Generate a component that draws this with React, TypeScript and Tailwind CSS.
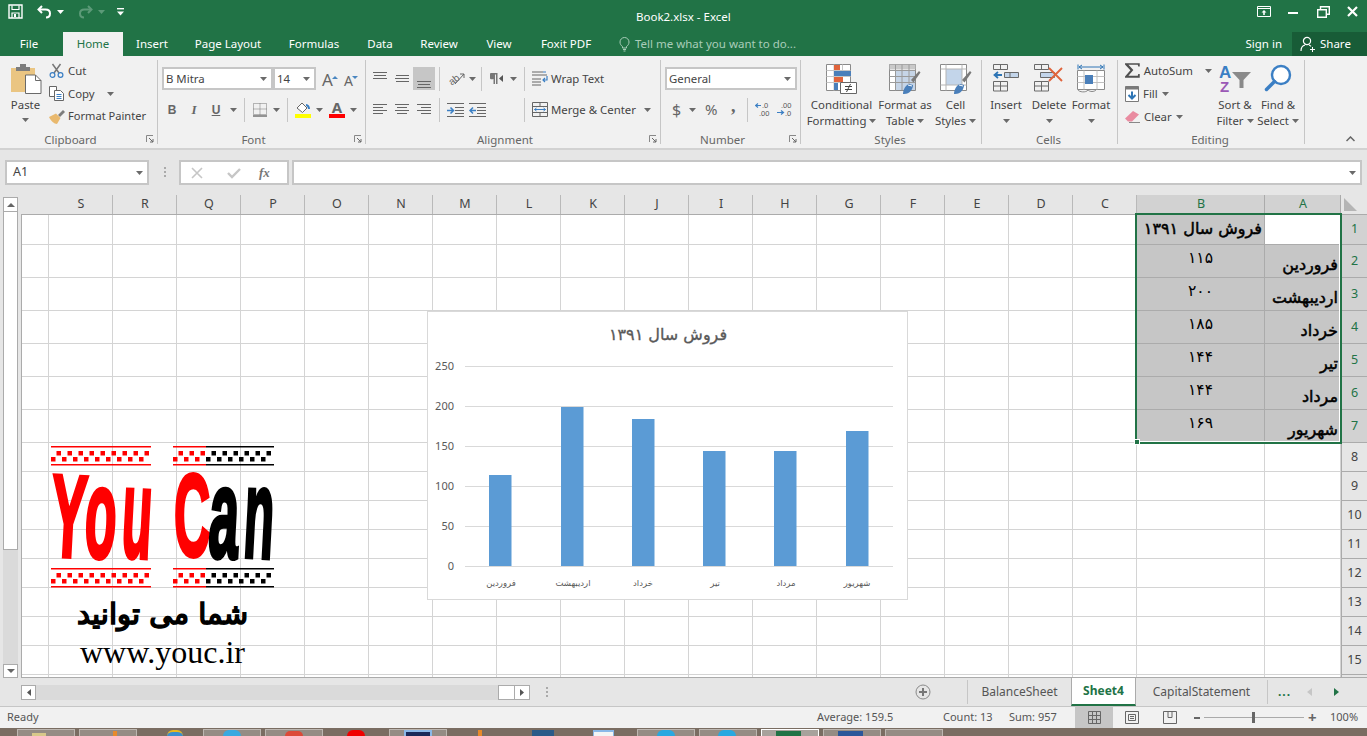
import React from "react";

const ui = "font-['Noto_Sans','Open_Sans',sans-serif]";
const fa = "font-['DejaVu_Sans','Noto_Sans',sans-serif]";

const Caret = ({ c = "#6a6a6a", cls = "" }: { c?: string; cls?: string }) => (
  <svg width="7" height="4" viewBox="0 0 7 4" className={"shrink-0 " + cls}><path d="M0 0h7L3.5 4z" fill={c} /></svg>
);

/* ---------- title bar icons ---------- */
const SaveIcon = () => (
  <svg width="15" height="15" viewBox="0 0 15 15" fill="none"><path d="M1 1h13v13H1z" stroke="#fff" strokeWidth="1.4" /><path d="M4 1.5v4h7v-4" stroke="#fff" strokeWidth="1.2" /><path d="M4 14V9h7v5" stroke="#fff" strokeWidth="1.2" /><path d="M6 10h2v3H6z" fill="#fff" /></svg>
);
const Undo = ({ c = "#fff" }: { c?: string }) => (
  <svg width="15" height="14" viewBox="0 0 15 14" fill="none"><path d="M5 1 1.5 4.5 5 8" stroke={c} strokeWidth="2" /><path d="M2 4.5h6.5c3 0 4.5 1.8 4.5 4s-1.5 4-4 4" stroke={c} strokeWidth="2" /></svg>
);
const Redo = () => (
  <svg width="15" height="14" viewBox="0 0 15 14" fill="none"><g transform="translate(15 0) scale(-1 1)"><path d="M5 1 1.5 4.5 5 8" stroke="#5c9a78" strokeWidth="2" /><path d="M2 4.5h6.5c3 0 4.5 1.8 4.5 4s-1.5 4-4 4" stroke="#5c9a78" strokeWidth="2" /></g></svg>
);
const Customize = () => (
  <svg width="7" height="8" viewBox="0 0 7 8"><path d="M0 0h7v1.4H0z" fill="#fff" /><path d="M0 3.5h7L3.5 7.5z" fill="#fff" /></svg>
);
const RibbonDisplay = () => (
  <svg width="14" height="11" viewBox="0 0 14 11" fill="none"><path d="M.5.5h13v10H.5z" stroke="#fff" /><path d="M.5 2.5h13" stroke="#fff" /><path d="M7 4 4.5 6.5h1.7v2.5h1.6V6.500h1.700z" fill="#fff" /></svg>
);
const Minimize = () => <svg width="10" height="10" viewBox="0 0 10 10"><path d="M0 5h10v2H0z" fill="#fff" /></svg>;
const Restore = () => (
  <svg width="13" height="12" viewBox="0 0 13 12" fill="none"><path d="M.7 3.700h8.600v7.600H.7z" stroke="#fff" strokeWidth="1.4" /><path d="M3.500 3V.7h8.800v7.600H9.500" stroke="#fff" strokeWidth="1.4" /></svg>
);
const Close = () => <svg width="11" height="11" viewBox="0 0 11 11"><path d="M1 1l9 9M10 1l-9 9" stroke="#fff" strokeWidth="2.200" /></svg>;
const Bulb = () => (
  <svg width="11" height="16" viewBox="0 0 11 16" fill="none"><path d="M3.500 10.500C2 9.500 1 8 1 6a4.500 4.500 0 0 1 9 0c0 2-1 3.500-2.500 4.500v1.500h-4z" stroke="#a9cdb9" /><path d="M4 13.500h3M4.500 15h2" stroke="#a9cdb9" /></svg>
);
const ShareIcon = () => (
  <svg width="16" height="16" viewBox="0 0 16 16" fill="none"><circle cx="7" cy="5" r="3.600" stroke="#fff" strokeWidth="1.200" /><path d="M1 15c0-3.500 2-5.500 4-6M9 9c.8.300 1.500.700 2 1.300" stroke="#fff" strokeWidth="1.200" /><path d="M12.500 11v5M10 13.500h5" stroke="#fff" /></svg>
);

/* ---------- clipboard icons ---------- */
const PasteIcon = () => (
  <svg width="32" height="30" viewBox="0 0 32 30"><path d="M1 4h24v24H1z" fill="#eac582" /><path d="M6 3h14v4H6z" fill="#7d7d7d" /><path d="M10 0h6v4h-6z" fill="#7d7d7d" /><path d="M15.500 11h10l5.500 5.500V29.500H15.500z" fill="#fff" stroke="#6a6a6a" /><path d="M25.500 11v5.500H31" fill="none" stroke="#6a6a6a" /></svg>
);
const CutIcon = () => (
  <svg width="15" height="15" viewBox="0 0 15 15" fill="none"><path d="M3.500 1l6.500 9M11.500 1 5 10" stroke="#777" strokeWidth="1.500" /><circle cx="3.500" cy="12" r="2.400" stroke="#3b7fc4" strokeWidth="1.200" /><circle cx="11.500" cy="12" r="2.400" stroke="#3b7fc4" strokeWidth="1.200" /></svg>
);
const CopyIcon = () => (
  <svg width="15" height="15" viewBox="0 0 15 15" fill="none"><path d="M.5.500h7v10h-7z" fill="#fff" stroke="#666" /><path d="M5.500 4.500h6l3 3v7h-9z" fill="#fff" stroke="#666" /><path d="M7.500 8.500h5M7.500 10.500h5M7.500 12.500h5" stroke="#3b7fc4" /></svg>
);
const PainterIcon = () => (
  <svg width="16" height="15" viewBox="0 0 16 15"><path d="M9 6 14 1l2 2-5 5z" fill="#7d7d7d" /><path d="M0 8 7 4.500l4.500 4.500L8 15C5 15 2 12 0 8z" fill="#e9b96e" /></svg>
);

/* ---------- font icons ---------- */
const BordersIcon = () => (
  <svg width="14" height="14" viewBox="0 0 14 14" fill="none"><path d="M.5.500h13v11H.5zM7 .500v11M.5 6h13" stroke="#777" strokeDasharray="1 1" /><path d="M0 13h14" stroke="#555" strokeWidth="1.200" /></svg>
);
const FillIcon = () => (
  <svg width="17" height="16" viewBox="0 0 17 16"><path d="M2 6 7 1l5 5-4.500 4.500z" fill="#fff" stroke="#666" /><path d="M11 2c2.500.500 4 2 4 5h-2c0-1.500-1-3-2-3z" fill="#3b7fc4" /><path d="M0 12h16v4H0z" fill="#ffff00" /></svg>
);
const FontColor = () => (
  <div className="flex flex-col items-center w-[16px]">
    <span className="text-[15px] font-bold leading-[13px] text-[#666]">A</span>
    <div className="w-[16px] h-[4px] bg-[#ff0000]" />
  </div>
);
const UpTri = ({ down = false }: { down?: boolean }) => (
  <svg width="6" height="3" viewBox="0 0 6 3" className="mb-[11px] -ml-[1px]"><path d={down ? "M0 0h6L3 3z" : "M0 3h6L3 0z"} fill="#4a86c0" /></svg>
);

/* ---------- alignment icons ---------- */
const Lines = ({ rows, w = 15 }: { rows: [number, number, number][]; w?: number }) => (
  <svg width={w} height="15" viewBox={`0 0 ${w} 15`}>
    {rows.map(([y, x, l], i) => <rect key={i} x={x} y={y} width={l} height="1" fill="#666" />)}
  </svg>
);
const Orientation = () => (
  <svg width="19" height="15" viewBox="0 0 19 15" fill="none"><text x="1" y="12" fontSize="10" fill="#666" transform="rotate(-38 7 8)" fontFamily="Liberation Sans">ab</text><path d="M8 13 17 3M13 3h4v4" stroke="#666" /></svg>
);
const Pilcrow = () => (
  <svg width="14" height="12" viewBox="0 0 14 12"><path d="M1 0h6.500v11H6V1.500H5V11H3.500V6A3 3 0 0 1 1 0z" fill="#777" /><path d="M13 2v7L9 5.500z" fill="#555" /></svg>
);
const WrapIcon = () => (
  <svg width="17" height="15" viewBox="0 0 17 15" fill="none"><path d="M0 1h11M0 4h15M0 8h9M0 11h9M0 14h9" stroke="#666" /><path d="M11 1h3" stroke="#3b7fc4" /><path d="M15 5v4h-4M13 7l-2 2 2 2" stroke="#3b7fc4" strokeWidth="1.200" /></svg>
);
const MergeIcon = () => (
  <svg width="16" height="15" viewBox="0 0 16 15" fill="none"><path d="M.5.500h15v14H.5zM.5 4.500h15M.5 10.500h15M8 .500v4M8 10.500v4" stroke="#666" /><path d="M2.500 7.500h11M4.500 6l-2 1.500 2 1.500M11.500 6l2 1.500-2 1.500" stroke="#3b7fc4" /></svg>
);
const Indent = ({ rev = false }: { rev?: boolean }) => (
  <svg width="17" height="14" viewBox="0 0 17 14" fill="none"><path d="M0 .500h17M8 4.500h9M8 7.500h9M8 10.500h9M0 13.500h17" stroke="#666" />
    {rev ? <path d="M7 7.500H1M4 4.500l-3 3 3 3" stroke="#3b7fc4" strokeWidth="1.500" /> : <path d="M0 7.500h6M3.500 4.500l3 3-3 3" stroke="#3b7fc4" strokeWidth="1.500" />}
  </svg>
);
const DecIcon = ({ more = false }: { more?: boolean }) => (
  <svg width="16" height="15" viewBox="0 0 16 15" fill="none">
    <text x={more ? 4 : 7} y="6" fontSize="7.500" fill="#555" fontFamily="Liberation Sans">{more ? ".00" : ".0"}</text>
    <text x={more ? 8 : 4} y="14" fontSize="7.500" fill="#555" fontFamily="Liberation Sans">{more ? ".0" : ".00"}</text>
    {more ? <path d="M0 10.500h6M4 8.500l2.500 2-2.500 2" stroke="#3b7fc4" strokeWidth="1.200" /> : <path d="M1 3.500h5M3 1.500l-2.500 2 2.500 2" stroke="#3b7fc4" strokeWidth="1.200" />}
  </svg>
);

/* ---------- styles / cells icons ---------- */
const CondIcon = () => (
  <svg width="31" height="30" viewBox="0 0 31 30" fill="none">
    <path d="M.5.500h24v26H.5z" fill="#fff" stroke="#8a8a8a" /><path d="M.5 6.500h24M.5 12.500h24M.5 18.500h24M8 .500v26M16.500 .500v26" stroke="#c6c6c6" />
    <path d="M8 1h6v5H8zM8 13h9v5H8z" fill="#e0643c" /><path d="M8 7h17v5H8zM8 19h4v7H8z" fill="#4a7fba" />
    <path d="M14.500 18.500h16v11h-16z" fill="#fff" stroke="#666" /><path d="M19 22.500h7M19 25.500h7M24.500 20l-4 8" stroke="#444" />
  </svg>
);
const Brush = () => (
  <g><path d="M22 16 30 7l1.500 1.500-7 10z" fill="#7a7a7a" /><path d="M14 30c0-5 3-9 6-10l4 1c0 4-3 9-9 9z" fill="#4a7fba" /><path d="M19 21l4 1" stroke="#fff" /></g>
);
const TableIcon = () => (
  <svg width="32" height="31" viewBox="0 0 32 31" fill="none">
    <path d="M.5.500h26v26H.5z" fill="#fff" stroke="#8a8a8a" /><path d="M.5 .500h26v5H.5z" fill="#c9c9c9" />
    <path d="M6 6h20v20H6z" fill="#c6d5e7" /><path d="M.5 6.500h26M.5 12.500h26M.5 18.500h26M6.500 .500v26M13 .500v26M20 .500v26" stroke="#9a9a9a" /><Brush />
  </svg>
);
const StylesIcon = () => (
  <svg width="32" height="31" viewBox="0 0 32 31" fill="none">
    <path d="M.5.500h26v26H.5z" fill="#fff" stroke="#8a8a8a" /><path d="M6 5h16v16H6z" fill="#c3d5ea" /><path d="M6 .500v26M.5 5h26M22 .500v26M.5 21h26" stroke="#b5b5b5" /><Brush />
  </svg>
);
const InsertIcon = () => (
  <svg width="26" height="28" viewBox="0 0 26 28" fill="none">
    <path d="M.5.500h14v5h-14zM7.500 .500v5M.5 17.500h14v9.500h-14zM7.500 17.500v9.500M.5 22h14" stroke="#6a6a6a" /><path d="M11.500 8.500h14v5h-14z" fill="#c3d5ea" stroke="#6a6a6a" /><path d="M17 8.500v5" stroke="#6a6a6a" /><path d="M9 11H1.500M5 8 1.500 11 5 14" stroke="#2e75b5" strokeWidth="1.800" />
  </svg>
);
const DeleteIcon = () => (
  <svg width="30" height="28" viewBox="0 0 30 28" fill="none">
    <path d="M.5.500h14v5h-14zM7.500 .500v5M.5 17.500h14v9.500h-14zM7.500 17.500v9.500M.5 22h14" stroke="#6a6a6a" /><path d="M6.500 8.500h14v5h-14z" fill="#c3d5ea" stroke="#6a6a6a" /><path d="M15 4l13 13M28 4 15 17" stroke="#e0643c" strokeWidth="1.900" />
  </svg>
);
const FormatIcon = () => (
  <svg width="29" height="30" viewBox="0 0 29 30" fill="none">
    <path d="M1 .500v5M27 .500v5M2 3h24M5 1 2 3l3 2M23 1l3 2-3 2" stroke="#2e75b5" />
    <path d="M.5 6.500h27v19h-27z" fill="#fff" stroke="#8a8a8a" /><path d="M7 6.500v19M20 6.500v19M.5 12.500h27M.5 18.500h27" stroke="#c0c0c0" /><path d="M8 11h8v9H8z" fill="#4a7fba" /><path d="M1 26c1 2 8 3 10 0M11 26c2 2 6 2 8 0" stroke="#8a8a8a" />
  </svg>
);
const Sigma = () => (
  <svg width="15" height="15" viewBox="0 0 15 15"><path d="M0 0h15v3.500h-1.500L13 1.700H3.500L8.500 7 3.500 12.800H13l.5-1.800H15V15H0v-1.500L5.500 7.300 0 1.400z" fill="#505050" /></svg>
);
const FillDown = () => (
  <svg width="14" height="16" viewBox="0 0 14 16" fill="none"><path d="M.5.500h13v15H.5z" fill="#fff" stroke="#7a7a7a" /><path d="M.5 .500h13v3h-13z" fill="#7a7a7a" /><path d="M7 5.500v7M3.500 9 7 12.500 10.500 9" stroke="#2e75b5" strokeWidth="2" /></svg>
);
const Eraser = () => (
  <svg width="15" height="13" viewBox="0 0 15 13"><path d="M0 8.500 8 1l6 3.500-7 7H3z" fill="#e98ba0" /><path d="M4 12.500h11" stroke="#888" /></svg>
);
const SortIcon = () => (
  <svg width="33" height="31" viewBox="0 0 33 31">
    <text x="0" y="14" fontSize="17" fontWeight="700" fill="#3b7fc4" fontFamily="Liberation Sans">A</text>
    <text x="1" y="28" fontSize="15" fontWeight="700" fill="#9b59b6" fontFamily="Liberation Sans">Z</text>
    <path d="M13 8h19l-7.500 8v8h-4v-8z" fill="#8a8a8a" />
  </svg>
);
const FindIcon = () => (
  <svg width="28" height="28" viewBox="0 0 28 28" fill="none"><circle cx="17" cy="11" r="9" stroke="#3b7fc4" strokeWidth="2.400" fill="#fff" /><path d="M10.500 17.500 2.500 25.500" stroke="#3b7fc4" strokeWidth="3.500" strokeLinecap="round" /></svg>
);
const Launcher = () => (
  <svg width="8" height="8" viewBox="0 0 8 8" fill="none" className="absolute right-[3px] bottom-[1px]"><path d="M.5 7V.5H7" stroke="#888" /><path d="M3 3l4 4M7 4v3H4" stroke="#666" /></svg>
);

/* ---------- ribbon structure ---------- */
const Group = ({ cls, label, launcher = true, children }: { cls: string; label: string; launcher?: boolean; children: React.ReactNode }) => (
  <div className={"relative flex flex-col my-[4px] border-r border-[#c6c6c6] " + cls}>
    <div className="flex-1 min-h-0">{children}</div>
    <div className={"h-[16px] leading-[23px] text-center text-[#666] text-[11.5px] " + (launcher ? "pr-[16px]" : "pr-[2px]")}>{label}</div>
    {launcher && <Launcher />}
  </div>
);

const Big = ({ cls, icon, a, b, arrow = true }: { cls: string; icon: React.ReactNode; a: string; b?: string; arrow?: boolean }) => (
  <div className={"flex flex-col items-center " + cls}>
    <div className="h-[37px] pt-[4px] flex items-start justify-center">{icon}</div>
    <div className="h-[16px] leading-[16px] whitespace-nowrap">{a}</div>
    <div className="h-[16px] leading-[16px] whitespace-nowrap flex items-center gap-[3px]">{b}{arrow && <Caret />}</div>
  </div>
);

const Sep = ({ cls = "" }: { cls?: string }) => <div className={"w-px h-[24px] bg-[#c6c6c6] " + cls} />;

const Combo = ({ cls, text }: { cls: string; text: string }) => (
  <div className={"h-[23px] bg-white border-2 border-[#c6c6c6] flex items-center justify-between pl-[2px] pr-[4px] text-[#444] " + cls}>
    <span>{text}</span><Caret />
  </div>
);

const Ribbon = () => (
  <div className={"flex h-[94px] shrink-0 bg-[#f1f1f1] border-b-2 border-[#d2d2d2] text-[11.4px] text-[#444] " + ui}>
    <Group cls="w-[158px]" label="Clipboard">
      <div className="flex">
        <div className="w-[49px] flex flex-col items-center pl-[2px] pt-[4px]">
          <PasteIcon />
          <div className="mt-[3px] leading-[16px]">Paste</div>
          <Caret cls="mt-[5px]" />
        </div>
        <div className="flex flex-col -mt-[1px]">
          <div className="h-[23px] flex items-center gap-[4px]"><CutIcon /><span>Cut</span></div>
          <div className="h-[23px] flex items-center gap-[4px]"><CopyIcon /><span>Copy</span><Caret cls="ml-[8px]" /></div>
          <div className="h-[23px] flex items-center gap-[3px]"><PainterIcon /><span className="text-[11.1px]">Format Painter</span></div>
        </div>
      </div>
    </Group>

    <Group cls="w-[208px]" label="Font">
      <div className="flex items-end pl-[4px] pt-[7px]">
        <Combo cls="w-[111px]" text="B Mitra" />
        <Combo cls="w-[43px]" text="14" />
        <div className="flex items-end h-[23px] ml-[6px]"><span className="text-[17px] text-[#666] leading-[20px]">A</span><UpTri /></div>
        <div className="flex items-end h-[23px] ml-[6px]"><span className="text-[14px] text-[#666] leading-[19px]">A</span><UpTri down /></div>
      </div>
      <div className="flex items-center h-[23px] mt-[8px] text-[#666]">
        <span className="ml-[8px] w-[12px] text-center font-['Liberation_Sans'] font-bold text-[12px]">B</span>
        <span className="ml-[10px] w-[12px] text-center font-['Liberation_Serif'] italic font-bold text-[13px]">I</span>
        <span className="ml-[10px] w-[12px] text-center font-['Liberation_Sans'] font-bold text-[12px] underline">U</span>
        <Caret cls="ml-[8px]" />
        <Sep cls="ml-[7px]" />
        <div className="ml-[8px]"><BordersIcon /></div>
        <Caret cls="ml-[6px]" />
        <Sep cls="ml-[7px]" />
        <div className="ml-[7px]"><FillIcon /></div>
        <Caret cls="ml-[4px]" />
        <div className="ml-[6px]"><FontColor /></div>
        <Caret cls="ml-[5px]" />
      </div>
    </Group>

    <Group cls="w-[295px]" label="Alignment">
      <div className="flex items-center h-[23px] mt-[7px]">
        <div className="ml-[7px]"><Lines rows={[[1, 0, 14], [4, 1, 12], [7, 0, 14]]} /></div>
        <div className="ml-[7px]"><Lines rows={[[4, 1, 13], [7, 0, 14], [10, 1, 13]]} /></div>
        <div className="ml-[3px] w-[22px] h-[23px] bg-[#c6c6c6] flex items-end justify-center"><Lines w={14} rows={[[6, 0, 14], [9, 1, 12], [12, 0, 14]]} /></div>
        <Sep cls="ml-[4px]" />
        <div className="ml-[7px]"><Orientation /></div>
        <Caret cls="ml-[3px]" />
        <Sep cls="ml-[5px]" />
        <div className="ml-[8px]"><Pilcrow /></div>
        <Caret cls="ml-[6px]" />
        <Sep cls="ml-[7px]" />
        <div className="ml-[7px]"><WrapIcon /></div>
        <span className="ml-[2px]">Wrap Text</span>
      </div>
      <div className="flex items-center h-[23px] mt-[8px]">
        <div className="ml-[7px]"><Lines rows={[[2, 0, 14], [5, 0, 10], [8, 0, 14], [11, 0, 10]]} /></div>
        <div className="ml-[7px]"><Lines rows={[[2, 0, 14], [5, 2, 10], [8, 0, 14], [11, 2, 10]]} /></div>
        <div className="ml-[7px]"><Lines rows={[[2, 0, 14], [5, 4, 10], [8, 0, 14], [11, 4, 10]]} /></div>
        <Sep cls="ml-[7px]" />
        <div className="ml-[7px]"><Indent /></div>
        <div className="ml-[5px]"><Indent rev /></div>
        <Sep cls="ml-[38px]" />
        <div className="ml-[7px]"><MergeIcon /></div>
        <span className="ml-[3px]">Merge &amp; Center</span>
        <Caret cls="ml-[8px]" />
      </div>
    </Group>

    <Group cls="w-[140px]" label="Number">
      <div className="pt-[7px] pl-[4px]"><Combo cls="w-[132px]" text="General" /></div>
      <div className="flex items-center h-[23px] mt-[8px] text-[#666]">
        <span className="ml-[11px] w-[9px] text-[16px] leading-none">$</span>
        <Caret cls="ml-[8px]" />
        <span className="ml-[9px] w-[14px] text-[15px] leading-none">%</span>
        <span className="ml-[12px] w-[4px] text-[18px] font-bold leading-none -mt-[8px] font-['Liberation_Serif']">,</span>
        <Sep cls="ml-[12px]" />
        <div className="ml-[7px]"><DecIcon /></div>
        <div className="ml-[6px]"><DecIcon more /></div>
      </div>
    </Group>

    <Group cls="w-[181px]" label="Styles" launcher={false}>
      <div className="flex pl-[7px]">
        <Big cls="w-[67px]" icon={<CondIcon />} a="Conditional" b="Formatting" />
        <Big cls="w-[60px]" icon={<TableIcon />} a="Format as" b="Table" />
        <Big cls="w-[41px]" icon={<StylesIcon />} a="Cell" b="Styles" />
      </div>
    </Group>

    <Group cls="w-[136px]" label="Cells" launcher={false}>
      <div className="flex pl-[3px]">
        <Big cls="w-[42px]" icon={<InsertIcon />} a="Insert" />
        <Big cls="w-[44px]" icon={<DeleteIcon />} a="Delete" />
        <Big cls="w-[40px]" icon={<FormatIcon />} a="Format" />
      </div>
    </Group>

    <Group cls="w-[187px]" label="Editing" launcher={false}>
      <div className="flex">
        <div className="w-[94px] flex flex-col pl-[7px] -mt-[1px]">
          <div className="h-[23px] flex items-center gap-[4px]"><Sigma /><span>AutoSum</span><Caret cls="ml-[8px]" /></div>
          <div className="h-[23px] flex items-center gap-[4px]"><FillDown /><span>Fill</span><Caret /></div>
          <div className="h-[23px] flex items-center gap-[4px]"><Eraser /><span>Clear</span><Caret /></div>
        </div>
        <Big cls="w-[46px]" icon={<SortIcon />} a="Sort &" b="Filter" />
        <Big cls="w-[40px]" icon={<FindIcon />} a="Find &" b="Select" />
      </div>
    </Group>

    <div className="flex-1 flex items-end justify-end pr-[12px] pb-[6px]">
      <svg width="9" height="6" viewBox="0 0 9 6" fill="none"><path d="M.5 5 4.500 1l4 4" stroke="#666" strokeWidth="1.500" /></svg>
    </div>
  </div>
);

/* ---------- title & tabs ---------- */
const tabs: [string, string][] = [
  ["Insert", "w-[58px]"], ["Page Layout", "w-[94px]"], ["Formulas", "w-[78px]"], ["Data", "w-[54px]"],
  ["Review", "w-[64px]"], ["View", "w-[56px]"], ["Foxit PDF", "w-[78px]"],
];

const Header = () => (
  <div className={"bg-[#217346] text-white shrink-0 text-[11.5px] " + ui}>
    <div className="h-[32px] flex items-start">
      <div className="w-[636px] flex items-center h-[23px]">
        <div className="ml-[8px]"><SaveIcon /></div>
        <div className="ml-[14px]"><Undo /></div>
        <Caret c="#fff" cls="ml-[5px]" />
        <div className="ml-[14px]"><Redo /></div>
        <Caret c="#5c9a78" cls="ml-[5px]" />
        <div className="ml-[12px]"><Customize /></div>
      </div>
      <div className="h-[33px] leading-[33px]">Book2.xlsx - Excel</div>
      <div className="flex-1 flex justify-end items-center h-[23px] pr-[9px]">
        <RibbonDisplay />
        <div className="ml-[17px]"><Minimize /></div>
        <div className="ml-[19px]"><Restore /></div>
        <div className="ml-[17px]"><Close /></div>
      </div>
    </div>
    <div className="h-[24px] flex items-stretch leading-[24px]">
      <div className="w-[58px] text-center">File</div>
      <div className="w-[60px] ml-[5px] bg-[#f1f1f1] text-[#217346] text-center">Home</div>
      {tabs.map(([t, w]) => <div key={t} className={"text-center " + w}>{t}</div>)}
      <div className="ml-[14px] flex items-center gap-[5px] text-[#a9cdb9]"><Bulb /><span>Tell me what you want to do...</span></div>
      <div className="flex-1" />
      <div className="mr-[10px]">Sign in</div>
      <div className="w-[75px] bg-[#185c37] flex items-center gap-[4px] pl-[8px]"><ShareIcon /><span>Share</span></div>
    </div>
  </div>
);

const FormulaBar = () => (
  <div className={"h-[45px] shrink-0 bg-[#e6e6e6] flex items-start pt-[10px] text-[#444] text-[12.5px] " + ui}>
    <div className="ml-[5px] w-[144px] h-[25px] bg-white border-2 border-[#c6c6c6] flex items-center justify-between pl-[6px] pr-[4px]"><span>A1</span><Caret /></div>
    <div className="ml-[15px] mt-[7px] flex flex-col gap-[2px]">
      <div className="w-[2px] h-[2px] bg-[#aaa]" /><div className="w-[2px] h-[2px] bg-[#aaa]" /><div className="w-[2px] h-[2px] bg-[#aaa]" />
    </div>
    <div className="ml-[13px] w-[110px] h-[25px] bg-white border-2 border-[#c6c6c6] flex items-center">
      <svg width="12" height="12" viewBox="0 0 12 12" className="ml-[10px]"><path d="M1 1l10 10M11 1 1 11" stroke="#c6c6c6" strokeWidth="1.600" /></svg>
      <svg width="14" height="12" viewBox="0 0 14 12" className="ml-[24px]"><path d="M1 6l4 4 8-8" fill="none" stroke="#c6c6c6" strokeWidth="2.400" /></svg>
      <span className="ml-[18px] italic font-bold text-[13px] text-[#777] font-['Liberation_Serif']">fx</span>
    </div>
    <div className="ml-[3px] w-[1070px] h-[25px] bg-white border-2 border-[#c6c6c6] flex items-center justify-end pr-[4px]"><Caret /></div>
  </div>
);

/* ---------- sheet ---------- */
const cols: [string, string][] = [
  ["", "w-[28px]"], ["S", "w-[64px]"], ["R", "w-[64px]"], ["Q", "w-[64px]"], ["P", "w-[64px]"], ["O", "w-[64px]"], ["N", "w-[64px]"],
  ["M", "w-[64px]"], ["L", "w-[64px]"], ["K", "w-[64px]"], ["J", "w-[64px]"], ["I", "w-[64px]"], ["H", "w-[64px]"], ["G", "w-[64px]"],
  ["F", "w-[64px]"], ["E", "w-[64px]"], ["D", "w-[64px]"], ["C", "w-[64px]"], ["B", "w-[128px]"], ["A", "w-[76px]"],
];
const rows: [string, string, string][] = [
  ["1", "h-[30px]", ""], ["2", "h-[33px]", "فروردین"], ["3", "h-[33px]", "اردیبهشت"], ["4", "h-[33px]", "خرداد"],
  ["5", "h-[33px]", "تیر"], ["6", "h-[33px]", "مرداد"], ["7", "h-[33px]", "شهریور"], ["8", "h-[29px]", ""],
  ["9", "h-[29px]", ""], ["10", "h-[29px]", ""], ["11", "h-[29px]", ""], ["12", "h-[29px]", ""], ["13", "h-[29px]", ""],
  ["14", "h-[29px]", ""], ["15", "h-[29px]", ""], ["", "h-[3px]", ""],
];
const nums = ["", "۱۱۵", "۲۰۰", "۱۸۵", "۱۴۴", "۱۴۴", "۱۶۹"];

const GridRow = ({ idx }: { idx: number }) => {
  const [n, h, label] = rows[idx];
  const sel = idx < 7;
  return (
    <div className={"flex overflow-hidden " + h}>
      {cols.map(([c, w], ci) => {
        if (sel && c === "B") {
          return (
            <div key={c} className={w + " bg-[#c6c6c6] border-r border-b border-[#ababab] text-black whitespace-nowrap " + fa + (idx === 0 ? " text-right pr-[2px] text-[16px] leading-[28px] [-webkit-text-stroke:.5px_#000]" : " text-center text-[15.5px] leading-[26px]")} dir="rtl">
              {idx === 0 ? "فروش سال ۱۳۹۱" : nums[idx]}
            </div>
          );
        }
        if (sel && c === "A") {
          return (
            <div key={c} className={w + " border-b border-[#ababab] flex items-end justify-start pb-[1px] pr-[3px] text-black text-[16px] leading-[22px] whitespace-nowrap [-webkit-text-stroke:.5px_#000] " + fa + (idx === 0 ? " bg-white" : " bg-[#c6c6c6]")} dir="rtl">
              {label}
            </div>
          );
        }
        return <div key={c} className={(ci === 0 ? "w-[27px]" : w) + " border-r border-b border-[#d4d4d4]"} />;
      })}
      <div className={"flex-1 flex items-center justify-center text-[12.5px] border-b border-l border-[#ababab] " + ui + (sel ? " bg-[#d2d2d2] text-[#217346]" : " bg-[#e6e6e6] text-[#444]")}>{n}</div>
    </div>
  );
};

const Chart = () => {
  const bars = [[489, 475], [561, 407], [632, 419], [703, 451], [774, 451], [846, 431]];
  const cats = [["فروردین", 501], ["اردیبهشت", 573], ["خرداد", 643], ["تیر", 715], ["مرداد", 786], ["شهریور", 857]] as const;
  return (
    <div className="absolute left-[406px] top-[116px] w-[481px] h-[289px] bg-white border border-[#d9d9d9]">
      <svg width="479" height="287" viewBox="428 312 479 287">
        {[366, 406, 446, 486, 526, 566].map((y, i) => (
          <g key={y}>
            <rect x="465" y={y} width="428" height="1" fill="#d9d9d9" />
            <text x="454" y={y + 4} textAnchor="end" fontSize="11" fill="#595959" fontFamily="Noto Sans">{250 - i * 50}</text>
          </g>
        ))}
        {bars.map(([x, y]) => <rect key={x} x={x} y={y} width="22.500" height={566 - y} fill="#5b9bd5" />)}
        {cats.map(([t, x]) => <text key={x} x={x} y="586" textAnchor="middle" fontSize="8.500" fill="#595959" fontFamily="DejaVu Sans" direction="rtl">{t}</text>)}
        <text x="668" y="340" textAnchor="middle" fontSize="16" fill="#595959" stroke="#595959" strokeWidth=".35" fontFamily="DejaVu Sans" direction="rtl">فروش سال ۱۳۹۱</text>
      </svg>
    </div>
  );
};

const Stripe = ({ w, red }: { w: number; red: number }) => (
  <svg width={w} height="20" viewBox={`0 0 ${w} 20`}>
    {[0, 18].map((y) => (
      <g key={y}><rect x="0" y={y} width={red} height="1.500" fill="#f00" /><rect x={red} y={y} width={w - red} height="1.500" fill="#000" /></g>
    ))}
    {Array.from({ length: 9 }, (_, i) => (
      <g key={i}>
        <rect x={5.500 + i * 11} y="5" width="4.500" height="4.500" fill={5.500 + i * 11 < red ? "#f00" : "#000"} />
        <rect x={0 + i * 11} y="11" width="4.500" height="4.500" fill={i * 11 < red ? "#f00" : "#000"} />
      </g>
    ))}
  </svg>
);

const letter = "absolute top-0 left-0 origin-top-left font-['Liberation_Sans'] font-bold leading-none text-[117px] ";

const Logo = () => (
  <div className="absolute left-[30px] top-[251px] w-[223px] flex flex-col">
    <div className="flex justify-between"><Stripe w={100} red={100} /><Stripe w={101} red={33} /></div>
    <div className="relative h-[102px]">
      <span className={letter + "text-[#f00] [-webkit-text-stroke:4px_#f00] transform-[translate(3px,-9px)_rotate(3deg)_scaleX(.46)]"}>Y</span>
      <span className={letter + "text-[#f00] [-webkit-text-stroke:4px_#f00] transform-[translate(38px,-17px)_rotate(3deg)_scale(.44,1.09)]"}>o</span>
      <span className={letter + "text-[#f00] [-webkit-text-stroke:4px_#f00] transform-[translate(75px,-17px)_rotate(3deg)_scale(.42,1.09)]"}>u</span>
      <span className={letter + "text-[#f00] [-webkit-text-stroke:4px_#f00] transform-[translate(123px,-9px)_scale(.43,1)]"}>C</span>
      <span className={letter + "text-black [-webkit-text-stroke:4px_#000] transform-[translate(162px,-17px)_rotate(3deg)_scale(.46,1.09)]"}>a</span>
      <span className={letter + "text-black [-webkit-text-stroke:4px_#000] transform-[translate(197px,-17px)_rotate(3deg)_scale(.42,1.09)]"}>n</span>
    </div>
    <div className="flex justify-between"><Stripe w={100} red={100} /><Stripe w={101} red={33} /></div>
    <div className={"text-center text-black text-[29px] leading-[48px] pt-[2px] whitespace-nowrap [-webkit-text-stroke:1.6px_#000] " + fa} dir="rtl">شما می توانید</div>
    <div className="text-center text-black text-[32px] leading-[28px] font-['Liberation_Serif'] whitespace-nowrap">www.youc.ir</div>
  </div>
);

const Sheet = () => (
  <div className="flex-1 min-h-0 flex bg-[#e6e6e6]">
    <div className="w-[21px] shrink-0 flex flex-col pl-[3px] pr-[3px] pt-[2px]">
      <div className="h-[15px] bg-white border border-[#ababab] flex items-center justify-center"><svg width="8" height="4" viewBox="0 0 8 4"><path d="M0 4h8L4 0z" fill="#666" /></svg></div>
      <div className="h-[338px] bg-white border-x border-b border-[#ababab]" />
      <div className="flex-1 bg-[#dadada]" />
      <div className="h-[14px] bg-white border border-[#ababab] flex items-center justify-center"><svg width="8" height="4" viewBox="0 0 8 4"><path d="M0 0h8L4 4z" fill="#666" /></svg></div>
    </div>
    <div className={"relative flex-1 min-w-0 flex flex-col overflow-hidden bg-white border-b border-[#ababab] " + ui}>
      <div className="h-[20px] flex bg-[#e6e6e6] border-b border-[#ababab] shrink-0 text-[12.5px] text-[#444]">
        {cols.map(([c, w]) => (
          <div key={c} className={w + " flex items-center justify-center pl-[1px] border-r " + (c === "A" || c === "B" ? "bg-[#d2d2d2] text-[#217346] border-[#ababab]" : "border-[#b9b9b9]") + (c === "" ? " border-transparent" : "")}>{c}</div>
        ))}
        <div className="flex-1 flex items-end justify-start pl-[3px] pb-[3px]"><svg width="13" height="13" viewBox="0 0 13 13"><path d="M0 0l13 13H0z" fill="#b5b5b5" /></svg></div>
      </div>
      <div className="border-l border-[#ababab] flex flex-col">
        {rows.map((r, i) => <GridRow key={i} idx={i} />)}
      </div>
      <Chart />
      <Logo />
      <div className="absolute left-[1114px] top-[18px] w-[207px] h-[231px] border-2 border-[#217346] pointer-events-none">
        <div className="absolute inset-0 border-r border-b border-white" />
        <div className="absolute -left-[3px] -bottom-[3px] w-[6px] h-[6px] bg-[#217346] border border-white" />
      </div>
    </div>
  </div>
);

const Tabs = () => (
  <div className={"h-[28px] shrink-0 bg-[#e6e6e6] flex items-center text-[12px] text-[#555] " + ui}>
    <div className="ml-[21px] w-[15px] h-[15px] bg-white border border-[#ababab] flex items-center justify-center"><svg width="4" height="7" viewBox="0 0 4 7"><path d="M4 0v7L0 3.500z" fill="#555" /></svg></div>
    <div className="w-[462px] h-[15px] bg-[#dadada]" />
    <div className="w-[17px] h-[15px] bg-white border border-[#ababab]" />
    <div className="w-[15px] h-[15px] bg-white border-y border-r border-[#ababab] flex items-center justify-center"><svg width="4" height="7" viewBox="0 0 4 7"><path d="M0 0v7l4-3.500z" fill="#555" /></svg></div>
    <div className="ml-[16px] flex flex-col gap-[2px]"><div className="w-[2px] h-[2px] bg-[#aaa]" /><div className="w-[2px] h-[2px] bg-[#aaa]" /><div className="w-[2px] h-[2px] bg-[#aaa]" /></div>
    <div className="ml-[367px]">
      <svg width="16" height="16" viewBox="0 0 16 16" fill="none"><circle cx="8" cy="8" r="7" stroke="#8a8a8a" /><path d="M8 4v8M4 8h8" stroke="#777" strokeWidth="2" /></svg>
    </div>
    <Sep cls="ml-[36px]" />
    <div className="w-[103px] text-center">BalanceSheet</div>
    <div className="w-[65px] h-full bg-white border-x border-[#ababab] border-b-2 border-b-[#217346] text-[#217346] font-bold text-center leading-[26px]">Sheet4</div>
    <div className="w-[131px] text-center">CapitalStatement</div>
    <Sep />
    <span className="ml-[10px] text-[#217346] font-bold tracking-[1px] leading-none">...</span>
    <svg width="5" height="8" viewBox="0 0 5 8" className="ml-[16px]"><path d="M5 0v8L0 4z" fill="#c6c6c6" /></svg>
    <svg width="5" height="8" viewBox="0 0 5 8" className="ml-[22px]"><path d="M0 0v8l5-4z" fill="#217346" /></svg>
  </div>
);

const Status = () => (
  <div className={"h-[22px] shrink-0 bg-[#f1f1f1] border-t border-[#c6c6c6] flex items-center text-[11px] text-[#555] " + ui}>
    <span className="ml-[7px] w-[810px]">Ready</span>
    <span className="w-[126px]">Average: 159.5</span>
    <span className="w-[66px]">Count: 13</span>
    <span className="w-[66px]">Sum: 957</span>
    <div className="w-[38px] h-full bg-[#c6c6c6] flex items-center justify-center"><svg width="13" height="13" viewBox="0 0 13 13" fill="none"><path d="M.5.500h12v12H.5zM4.500.500v12M8.500.500v12M.5 4.500h12M.5 8.500h12" stroke="#666" /></svg></div>
    <div className="ml-[12px]"><svg width="14" height="13" viewBox="0 0 14 13" fill="none"><path d="M.5.500h13v12H.5z" stroke="#666" /><path d="M3.500 3.500h7v6h-7zM5 5.500h4M5 7.500h4" stroke="#666" /></svg></div>
    <div className="ml-[24px]"><svg width="14" height="13" viewBox="0 0 14 13" fill="none"><path d="M.5.500h13v12H.5zM5 .500v6h4v-6" stroke="#666" /></svg></div>
    <div className="ml-[17px] w-[6px] h-[2px] bg-[#666]" />
    <div className="ml-[4px] w-[100px] relative h-px bg-[#aaa]"><div className="absolute left-[48px] -top-[5px] w-[3px] h-[11px] bg-[#666]" /></div>
    <div className="ml-[4px] w-[9px] font-bold text-[15px] leading-none text-[#666]">+</div>
    <span className="ml-[13px]">100%</span>
  </div>
);

const tb = ["w-[58px] ml-[17px]", "w-[58px] ml-[4px]", "w-[58px] ml-[66px]", "w-[58px] ml-[4px]", "w-[58px] ml-[66px]", "w-[58px] ml-[190px]", "w-[58px] ml-[4px]", "w-[58px] ml-[4px]", "w-[58px] ml-[4px]", "w-[58px] ml-[4px]"];

const Taskbar = () => (
  <div className="h-[8px] shrink-0 bg-[#7a6d62] flex items-end overflow-hidden relative">
    {tb.map((c, i) => <div key={i} className={"h-[7px] shrink-0 bg-[#958c84] border-t border-x border-[#bdb7b1] " + c + (i === 7 ? " border-white bg-[#a8a29c]" : "")} />)}
    <div className="absolute left-[32px] top-[5px] w-[14px] h-[3px] bg-[#d8c88a]" />
    <div className="absolute left-[113px] top-[3px] w-[4px] h-[5px] bg-[#e88a2a]" />
    <div className="absolute left-[167px] top-[2px] w-[16px] h-[6px] rounded-t-full border-t-2 border-[#e8b820] bg-[#3b8fd0]" />
    <div className="absolute left-[223px] top-[2px] w-[18px] h-[6px] rounded-t-full bg-[#39a9e0]" />
    <div className="absolute left-[285px] top-[3px] w-[18px] h-[5px] rounded-t-full bg-[#dc4a38]" />
    <div className="absolute left-[347px] top-[2px] w-[18px] h-[6px] rounded-t-full bg-[#f00000]" />
    <div className="absolute left-[404px] top-[2px] w-[28px] h-[6px] bg-[#1a2a5a] border-t-2 border-x-2 border-[#8ab8e8]" />
    <div className="absolute left-[478px] top-[2px] w-[4px] h-[6px] bg-[#e88a2a]" />
    <div className="absolute left-[532px] top-[2px] w-[22px] h-[6px] bg-[#2a5a88]" />
    <div className="absolute left-[593px] top-[2px] w-[21px] h-[6px] bg-[#f4f4f4] border-t-2 border-x border-[#8ab8e8]" />
    <div className="absolute left-[657px] top-[2px] w-[18px] h-[6px] rounded-t-full bg-[#29a8e0]" />
    <div className="absolute left-[718px] top-[2px] w-[18px] h-[6px] rounded-t-full bg-[#29a8e0]" />
    <div className="absolute left-[776px] top-[3px] w-[25px] h-[5px] bg-[#217346]" />
    <div className="absolute left-[838px] top-[3px] w-[25px] h-[5px] bg-[#2b579a]" />
  </div>
);

export default function App() {
  return (
    <div className="w-[1367px] h-[736px] overflow-hidden flex flex-col bg-[#e6e6e6]">
      <Header />
      <Ribbon />
      <FormulaBar />
      <Sheet />
      <Tabs />
      <Status />
      <Taskbar />
    </div>
  );
}
